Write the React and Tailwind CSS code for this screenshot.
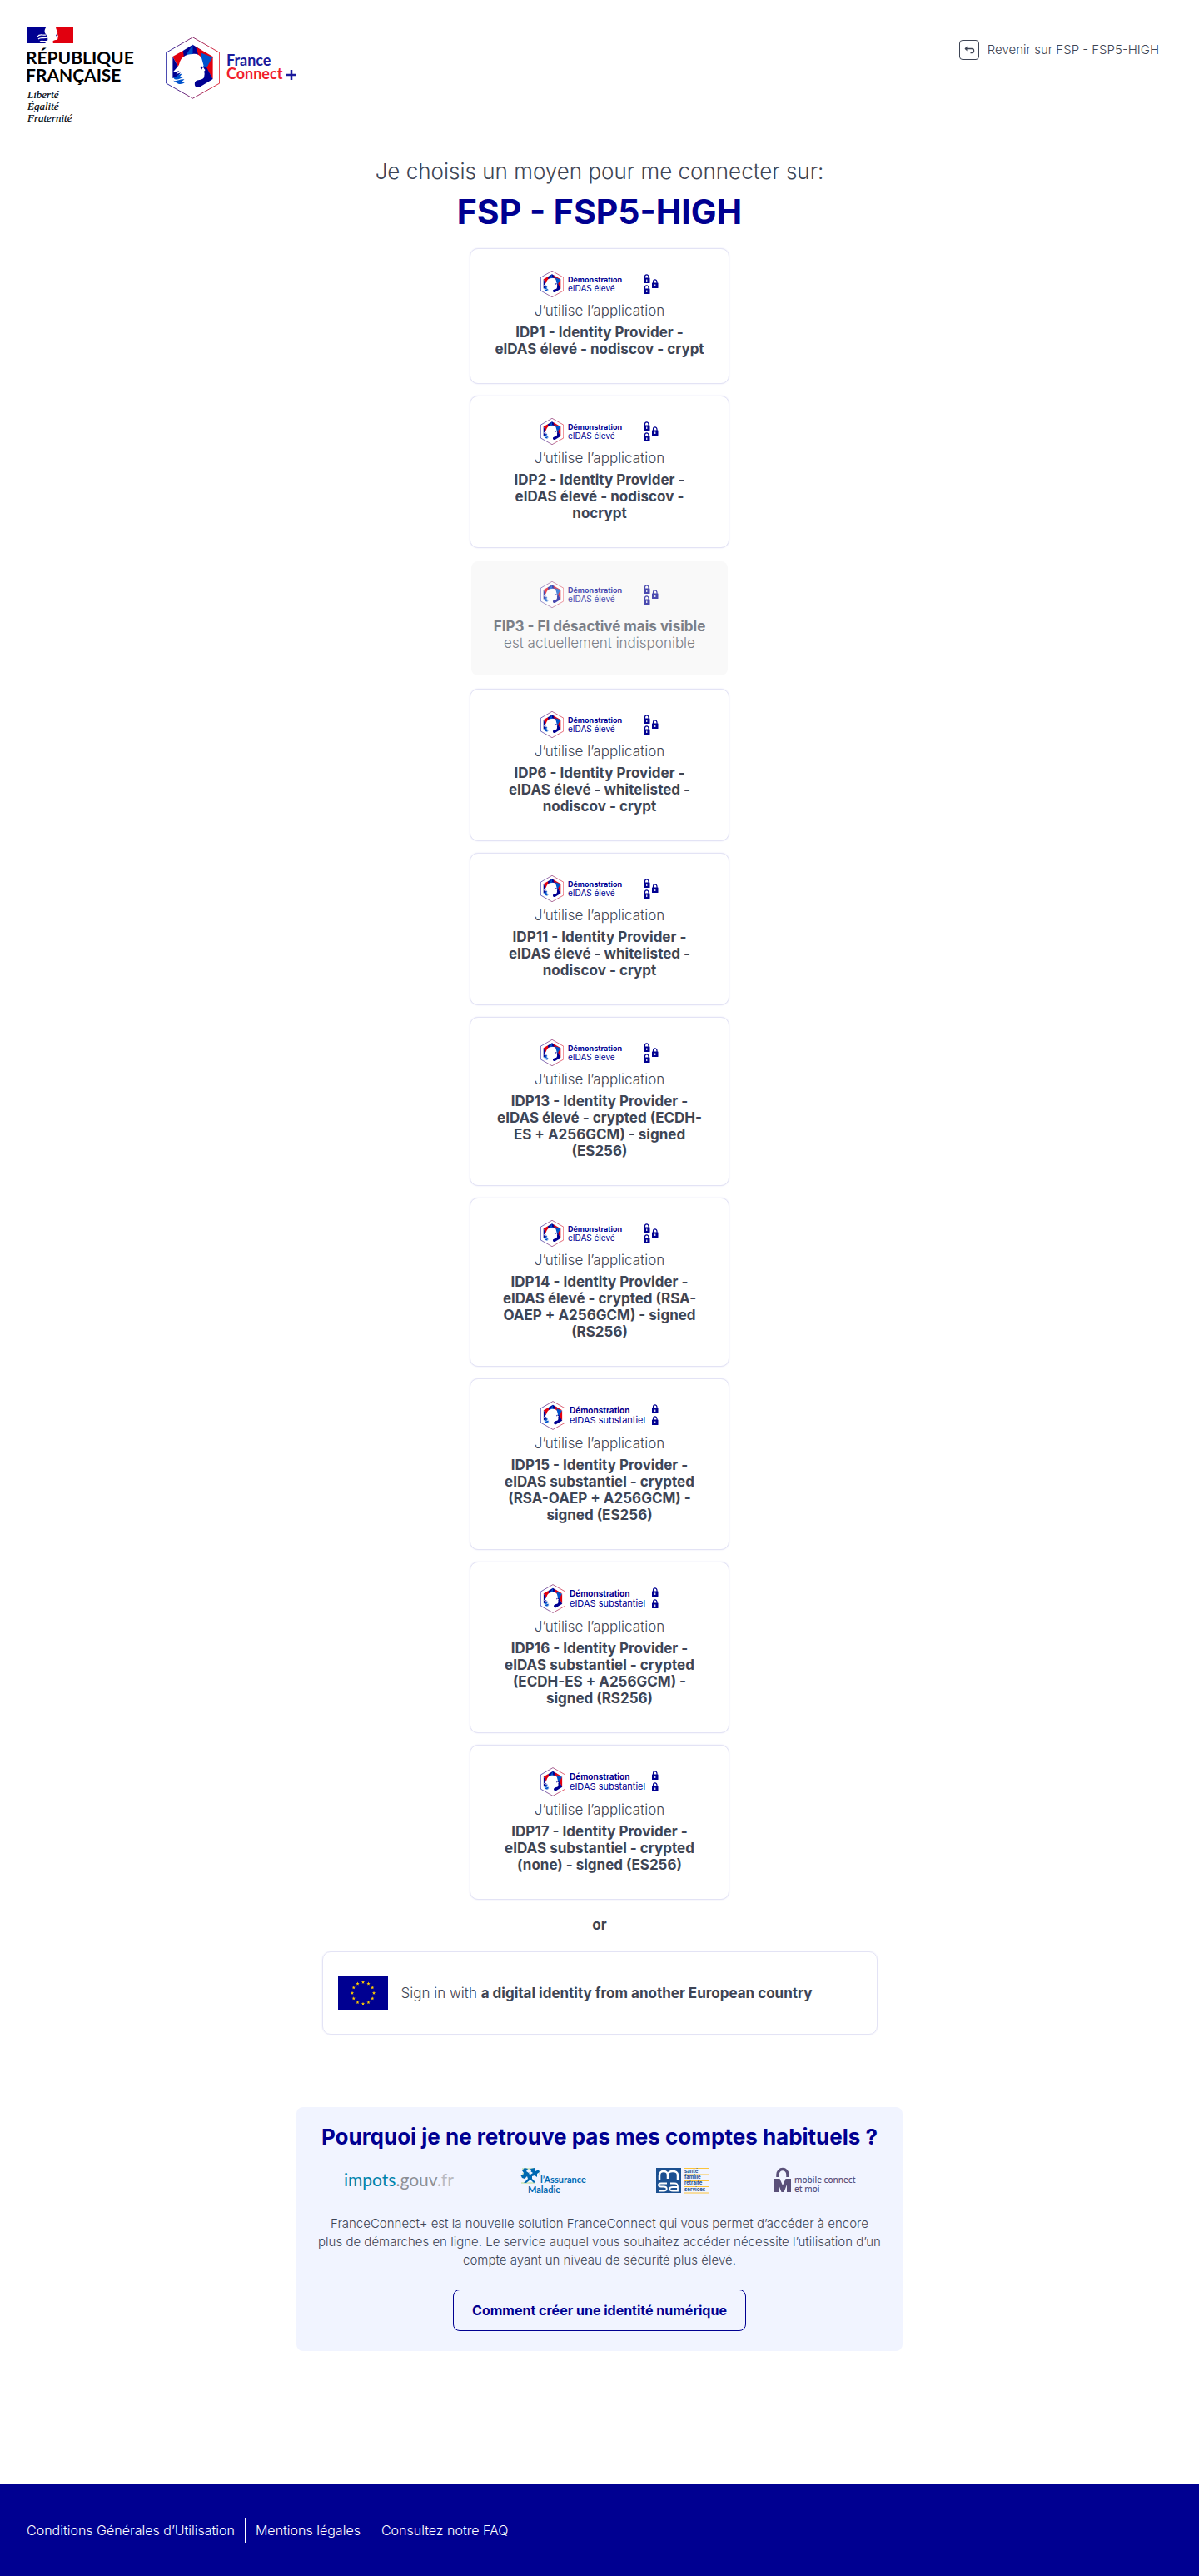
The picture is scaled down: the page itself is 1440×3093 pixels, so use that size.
const providers = [
  { name: "IDP1 - Identity Provider - eIDAS élevé - nodiscov - crypt", level: "high" },
  { name: "IDP2 - Identity Provider - eIDAS élevé - nodiscov - nocrypt", level: "high" },
  { name: "FIP3 - FI désactivé mais visible", level: "high", disabled: true },
  { name: "IDP6 - Identity Provider - eIDAS élevé - whitelisted - nodiscov - crypt", level: "high" },
  { name: "IDP11 - Identity Provider - eIDAS élevé - whitelisted - nodiscov - crypt", level: "high" },
  { name: "IDP13 - Identity Provider - eIDAS élevé - crypted (ECDH-ES + A256GCM) - signed (ES256)", level: "high" },
  { name: "IDP14 - Identity Provider - eIDAS élevé - crypted (RSA-OAEP + A256GCM) - signed (RS256)", level: "high" },
  { name: "IDP15 - Identity Provider - eIDAS substantiel - crypted (RSA-OAEP + A256GCM) - signed (ES256)", level: "substantial" },
  { name: "IDP16 - Identity Provider - eIDAS substantiel - crypted (ECDH-ES + A256GCM) - signed (RS256)", level: "substantial" },
  { name: "IDP17 - Identity Provider - eIDAS substantiel - crypted (none) - signed (ES256)", level: "substantial" },
];

/* Hexagon with the faceted background and Marianne's profile, on a 194 x 223 grid. */
function HexagonMark({ stroke = 2.5 }) {
  return (
    <g>
      <defs>
        <linearGradient id="hex-edge" x1="0" x2="1" y1="0" y2="0">
          <stop offset="0" stopColor="#000091" />
          <stop offset="1" stopColor="#e1000f" />
        </linearGradient>
      </defs>
      <path d="M97 2 193 57V167L97 221 2 167V57Z" fill="#fff" stroke="url(#hex-edge)" strokeWidth={stroke} />
      <path d="M97 29 62 50 52 90 97 72Z" fill="#000091" />
      <path d="M97 29 74 64 98 68 104 50Z" fill="#0053cc" />
      <path d="M97 29 128 48 118 72 97 66Z" fill="#000091" />
      <path d="M62 50 25 71 44 106 66 78Z" fill="#e1000f" />
      <path d="M25 71V128L44 106Z" fill="#000091" />
      <path d="M108 36 169 71 120 76Z" fill="#e1000f" />
      <path d="M126 58 169 74 150 118 126 100Z" fill="#0053cc" />
      <path d="M169 72V152L146 112Z" fill="#e1000f" />
      <path d="M126 104 148 112 169 152 121 181C108 184 101 176 104 160L130 146Z" fill="#000091" />
      <path
        d="M97 62C112 60 124 66 129 78L136 103C132 107 137 114 142 119L137 126C141 131 139 136 138 143C137 153 124 155 113 156C103 159 101 171 106 181L92 185 78 176 52 130 42 121C44 112 46 105 49 96C53 76 70 62 97 62Z"
        fill="#fff"
      />
      <path d="M124 110C127 106 132 105 134 109L128 119 126 113Z" fill="#000091" />
      <path d="M25 125C32 132 38 123 49 122L37 135 54 129 41 143 25 149Z" fill="#000091" />
      <path d="M28 145C40 146 44 132 58 133L50 144 62 146C52 149 45 157 31 152ZM27 157C40 162 51 150 67 153L54 163 68 164C58 172 47 171 40 166Z" fill="#0053cc" />
    </g>
  );
}

function RepubliqueLogo() {
  return (
    <svg viewBox="0 0 135 118" className="h-[118px] w-[135px]" role="img" aria-label="République Française">
      <path d="M0 0H24C21 3 21 7 23 9L25 13C26 16 25 18 22 20H0Z" fill="#000091" />
      <path d="M35 0H56V20H32C30 17 33 16 36 16C38 16 37 13 38 12L37 9C38 6 35 4 35 0Z" fill="#e1000f" />
      <path d="M13 12C16 8 19 11 23 10M14 15C17 12 20 15 25 13M16 18C19 16 21 19 25 17" fill="none" stroke="#fff" strokeWidth="1.2" />
      <path d="M35 10 37 9 36 12Z" fill="#000091" />
      <g fontFamily="Lato, sans-serif" fontWeight="700" fontSize="21" fill="#000">
        <text x="-1" y="45">RÉPUBLIQUE</text>
        <text x="-1" y="66">FRANÇAISE</text>
      </g>
      <g fontFamily="'Liberation Serif', serif" fontStyle="italic" fontSize="13" fill="#000" stroke="#000" strokeWidth="0.2">
        <text x="1" y="86">Liberté</text>
        <text x="1" y="100">Égalité</text>
        <text x="1" y="114">Fraternité</text>
      </g>
    </svg>
  );
}

function FranceConnectLogo() {
  return (
    <svg viewBox="0 0 162 76" className="h-[76px] w-[162px]" role="img" aria-label="FranceConnect+">
      <svg x="0" y="0" width="65" height="75" viewBox="0 0 194 223">
        <HexagonMark />
      </svg>
      <g fontFamily="Lato, sans-serif" fontWeight="700" fontSize="18">
        <text x="73" y="35" fill="#1a1a9c">France</text>
        <text x="73" y="51" fill="#f01e2c">Connect</text>
      </g>
      <path d="M145 46H157M151 40V52" fill="none" stroke="#1a1a9c" strokeWidth="2.500" />
    </svg>
  );
}

function Lock({ x, y }) {
  return (
    <g transform={`translate(${x} ${y})`}>
      <path d="M1.500 5V3.500A2.200 2.500 0 0 1 6 3.500V5" fill="none" stroke="#000091" strokeWidth="1.200" />
      <rect x="0" y="4.500" width="7.500" height="6.500" rx="0.500" fill="#000091" />
      <path d="M3.750 6.500V9" stroke="#fff" strokeWidth="1.200" />
    </g>
  );
}

function ProviderLogo({ level }) {
  const high = level === "high";
  return (
    <svg
      viewBox={high ? "0 0 142 32" : "0 0 142 35"}
      className={high ? "h-8 w-[142px]" : "h-[35px] w-[142px]"}
      role="img"
      aria-label={high ? "Démonstration eIDAS élevé" : "Démonstration eIDAS substantiel"}
    >
      <svg x="0" y="0" width={high ? 28 : 30} height={high ? 32 : 35} viewBox="0 0 194 223">
        <HexagonMark stroke={4} />
      </svg>
      <g fontFamily="Inter, sans-serif" fill="#000091">
        <text x={high ? 33 : 35} y={high ? 14 : 15} fontSize={high ? 9 : 10} fontWeight="700">Démonstration</text>
        <text x={high ? 33 : 35} y={high ? 25 : 27} fontSize={high ? 10 : 11}>{high ? "eIDAS élevé" : "eIDAS substantiel"}</text>
      </g>
      {high ? (
        <>
          <Lock x={124} y={4} />
          <Lock x={134} y={10} />
          <Lock x={124} y={17} />
        </>
      ) : (
        <>
          <Lock x={134} y={4} />
          <Lock x={134} y={18} />
        </>
      )}
    </svg>
  );
}

function ProviderCard({ provider }) {
  const { name, level, disabled } = provider;
  if (disabled) {
    return (
      <button
        type="button"
        disabled
        className="flex w-full flex-col items-center rounded-[10px] border-2 border-transparent bg-[#f9f9f9] bg-clip-padding px-4 pt-6 pb-[29px] text-[#7b7f88]"
      >
        <span className="opacity-70"><ProviderLogo level={level} /></span>
        <span className="mt-3 text-[17px] leading-5 font-bold">{name}</span>
        <span className="text-[17px] leading-5 font-light">est actuellement indisponible</span>
      </button>
    );
  }
  return (
    <button
      type="button"
      className="flex w-full flex-col items-center rounded-[10px] border border-[#e3e3f5] bg-white px-6 pt-[26px] pb-[31px] shadow-[0_0_2px_#e3e3f5]"
    >
      <ProviderLogo level={level} />
      <span className="mt-1 text-[17px] leading-6 font-light">J’utilise l’application</span>
      <span className="mt-1 max-w-[252px] text-[17px] leading-5 font-bold">{name}</span>
    </button>
  );
}

function EuropeanFlag() {
  const stars = Array.from({ length: 12 }, (_, i) => {
    const a = (i * Math.PI) / 6;
    return [30 + 13 * Math.sin(a), 21 - 13 * Math.cos(a)];
  });
  return (
    <svg viewBox="0 0 60 42" className="h-[42px] w-[60px] shrink-0" aria-hidden="true">
      <rect width="60" height="42" fill="#000091" />
      {stars.map(([x, y], i) => (
        <path
          key={i}
          transform={`translate(${x} ${y})`}
          d="M0-2.200 .55-.7 2.100-.7 .85 .3 1.300 1.800 0 .9-1.300 1.800-.85 .3-2.100-.7-.55-.7Z"
          fill="#fc0"
        />
      ))}
    </svg>
  );
}

function ImpotsLogo() {
  return (
    <svg viewBox="0 0 134 32" className="h-8 w-[134px]" role="img" aria-label="impots.gouv.fr">
      <text x="0" y="23" fontFamily="Lato, sans-serif" fontSize="21">
        <tspan fill="#0084ad">impots</tspan>
        <tspan fill="#8d8f94">.gouv</tspan>
        <tspan fill="#b9bbc2">.fr</tspan>
      </text>
    </svg>
  );
}

function AssuranceLogo() {
  return (
    <svg viewBox="0 0 84 32" className="h-8 w-[84px]" role="img" aria-label="l'Assurance Maladie">
      <path d="M2 2H18M2 8H8M1 19H18M22 8H23" stroke="#b5d98a" strokeWidth="1.200" />
      <path
        d="M5 1 9 2 7 5 10 7 13 5 12 2 17 1 18 5 22 3 23 6 20 8 20 12 17 10 14 11 14 14 18 18 16 19 12 15 7 19 4 19 9 14 8 11 5 14 2 13 0 9 3 10 4 7 2 4Z"
        fill="#0068b1"
      />
      <path d="M12 5 15 7 12 9 10 8Z" fill="#f1f4ff" />
      <g fontFamily="Lato, sans-serif" fontWeight="700" fill="#0068b1">
        <text x="24" y="19" fontSize="11">l’Assurance</text>
        <text x="9" y="31" fontSize="11">Maladie</text>
      </g>
    </svg>
  );
}

function MsaLogo() {
  return (
    <svg viewBox="0 0 64 32" className="h-8 w-16" role="img" aria-label="MSA : santé, famille, retraite, services">
      <rect x="0" y="1" width="30" height="30" fill="#1c5091" />
      <path d="M4 16V9.500C4 3.500 14 3.500 14 9.500V14M14 9.500C14 3.500 26 3.500 26 9.500V16" fill="none" stroke="#fff" strokeWidth="2.500" />
      <path
        d="M13 19.500H6C2 19.500 2 23.500 6 23.500H9C14 23.500 14 28.500 9 28.500H3M17 19.500H22C26 19.500 26 21.500 26 23.500V28.500H20C15 28.500 15 24 20 24H26"
        fill="none"
        stroke="#fff"
        strokeWidth="1.800"
      />
      <path d="M34 1.500H63M34 9H63M34 16.500H63M34 23.500H63M34 31H63" stroke="#fbc43c" strokeWidth="1" />
      <g fontFamily="Inter, sans-serif" fontWeight="700" fontSize="6" fill="#1c5091">
        <text x="34" y="7">santé</text>
        <text x="34" y="14">famille</text>
        <text x="34" y="21">retraite</text>
        <text x="34" y="29">services</text>
      </g>
    </svg>
  );
}

function MobileConnectLogo() {
  return (
    <svg viewBox="0 0 98 32" className="h-8 w-[98px]" role="img" aria-label="mobile connect et moi">
      <path d="M4 12V9A6 6.500 0 0 1 16 9V12" fill="none" stroke="#5a5079" strokeWidth="3.500" />
      <path d="M0 14H20V30H15V21L11.500 30H8.500L5 21V30H0Z" fill="#5a5079" />
      <path d="M6.500 14H13.500L10 22Z" fill="#f1f4ff" />
      <g fontFamily="'Noto Sans', sans-serif" fontWeight="500" fontSize="10" fill="#5a5079">
        <text x="24" y="19">mobile connect</text>
        <text x="24" y="30">et moi</text>
      </g>
    </svg>
  );
}

export default function App() {
  return (
    <div className="bg-white font-[Inter,sans-serif] text-[#3e4555]">
      <header className="flex items-start justify-between pt-8 pr-12 pl-8">
        <div className="flex items-start gap-8">
          <RepubliqueLogo />
          <div className="mt-3"><FranceConnectLogo /></div>
        </div>
        <a href="#retour" className="mt-4 flex items-center gap-2.5 text-[15px] leading-6 font-light">
          <span className="flex size-6 items-center justify-center rounded border border-[#3e4555]">
            <svg viewBox="0 0 14 12" className="h-3 w-3.5" aria-hidden="true">
              <path d="M2 4.500H10A2.500 2.500 0 0 1 10 9.500H8.500" fill="none" stroke="#3e4555" strokeWidth="1.500" />
              <path d="M4.500 1.500 1.500 4.500 4.500 7.500Z" fill="#3e4555" />
            </svg>
          </span>
          Revenir sur FSP - FSP5-HIGH
        </a>
      </header>

      <main className="flex flex-col items-center px-4 pt-10 text-center">
        <h1 className="flex flex-col">
          <span className="text-[26px] leading-8 font-light">Je choisis un moyen pour me connecter sur:</span>
          <span className="mt-2 text-[41px] leading-12 font-bold text-[#000091]">FSP - FSP5-HIGH</span>
        </h1>

        <ul className="mt-5 flex w-full max-w-[312px] flex-col gap-3.5">
          {providers.map((p) => (
            <li key={p.name}><ProviderCard provider={p} /></li>
          ))}
        </ul>

        <p className="mt-[18px] text-[17px] leading-6 font-bold">or</p>

        <button
          type="button"
          className="mt-5 flex w-full max-w-[667px] items-center gap-4 rounded-[10px] border border-[#e3e3f5] px-[18px] py-7 text-left text-[17px] leading-6 font-light shadow-[0_0_2px_#e3e3f5]"
        >
          <EuropeanFlag />
          <span>Sign in with <b className="font-bold">a digital identity from another European country</b></span>
        </button>

        <section className="mt-[87px] flex w-full max-w-[728px] flex-col items-center rounded-lg bg-[#f1f4ff] px-4 pt-5 pb-6">
          <h2 className="text-[26px] leading-8 font-bold text-[#000091]">Pourquoi je ne retrouve pas mes comptes habituels ?</h2>
          <div className="mt-5 flex w-full items-center justify-between pr-10 pl-[41px]">
            <ImpotsLogo />
            <AssuranceLogo />
            <MsaLogo />
            <MobileConnectLogo />
          </div>
          <p className="mt-[25px] text-[15px] leading-[22px] font-light">
            FranceConnect+ est la nouvelle solution FranceConnect qui vous permet d’accéder à encore{" "}
            <br className="max-md:hidden" />
            plus de démarches en ligne. Le service auquel vous souhaitez accéder nécessite l’utilisation d’un{" "}
            <br className="max-md:hidden" />
            compte ayant un niveau de sécurité plus élevé.
          </p>
          <button type="button" className="mt-6 h-[50px] rounded-lg border border-[#000091] px-[22px] text-base font-bold text-[#000091]">
            Comment créer une identité numérique
          </button>
        </section>
      </main>

      <footer className="mt-40 bg-[#000091] px-8 py-10 text-base font-light text-white">
        <ul className="flex h-[30px] items-stretch">
          <li className="flex items-center pr-3"><a href="#cgu">Conditions Générales d’Utilisation</a></li>
          <li className="flex items-center border-l border-white px-3"><a href="#mentions">Mentions légales</a></li>
          <li className="flex items-center border-l border-white pl-3"><a href="#faq">Consultez notre FAQ</a></li>
        </ul>
      </footer>
    </div>
  );
}
